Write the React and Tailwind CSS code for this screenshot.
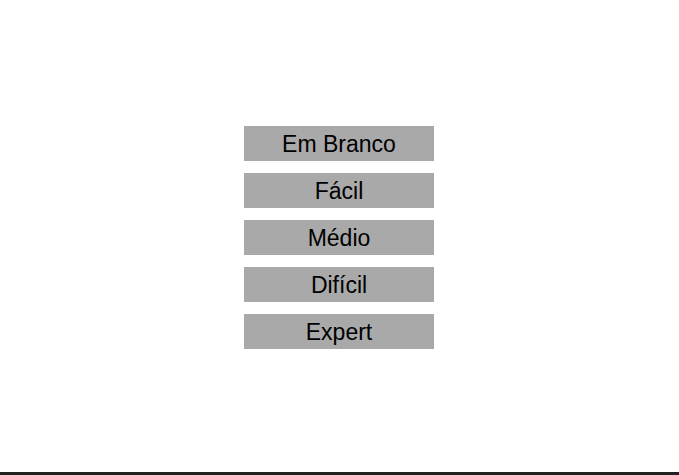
export default function App() {
  const items = ["Em Branco", "Fácil", "Médio", "Difícil", "Expert"];
  return (
    <div
      className="h-[475px] w-full bg-white border-b-[3px] border-[#222222] pt-[2px] pr-[1px] flex flex-col items-center justify-center gap-[12px]"
      style={{ fontFamily: '"Liberation Sans", Arial, sans-serif' }}
    >
      {items.map((t) => (
        <div
          key={t}
          className="w-[190px] h-[35px] bg-[#a9a9a9] text-black text-[23px] leading-none pt-[2px] flex items-center justify-center"
        >
          {t}
        </div>
      ))}
    </div>
  );
}
